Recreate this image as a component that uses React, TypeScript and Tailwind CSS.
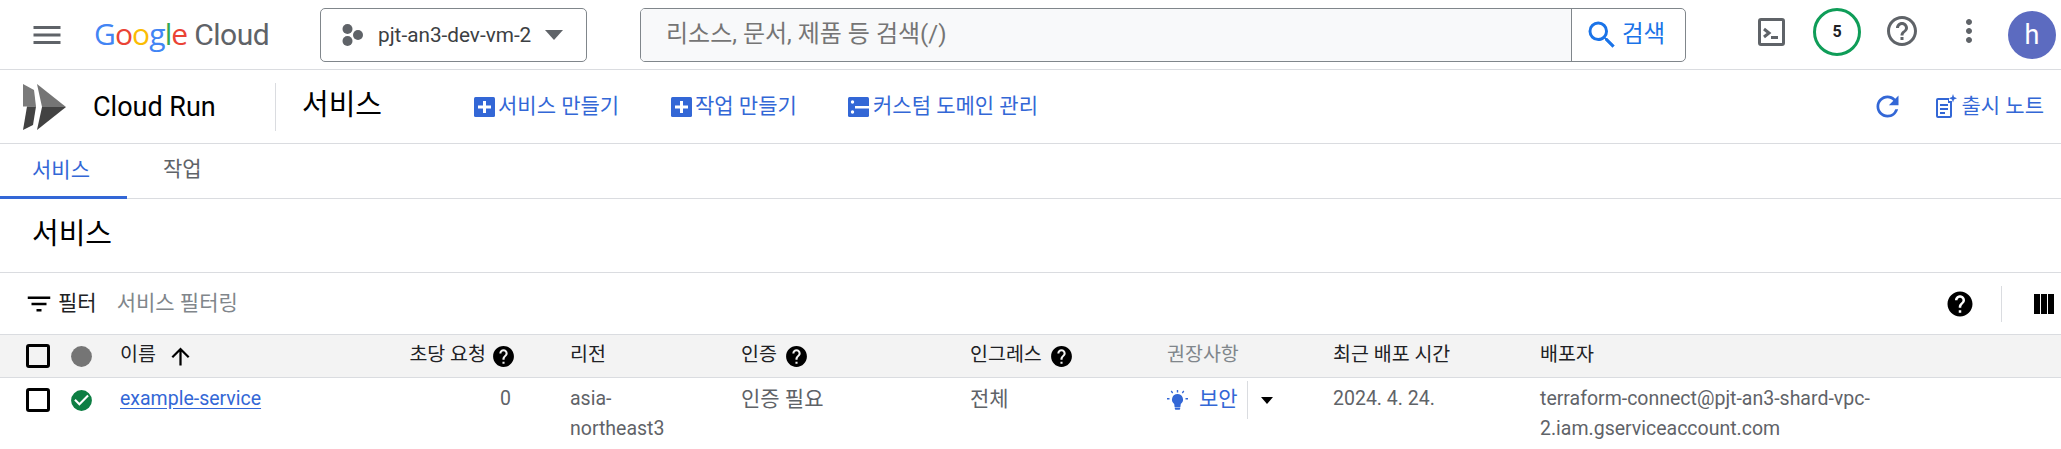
const font = "font-['Roboto','Noto_Sans_CJK_KR',sans-serif]";

function I({ d, size, className = "" }: { d: string; size: number; className?: string }) {
  return (
    <svg width={size} height={size} viewBox="0 0 24 24" fill="currentColor" className={`shrink-0 ${className}`}>
      <path d={d} />
    </svg>
  );
}

const P = {
  menu: "M3 18h18v-2H3v2zm0-5h18v-2H3v2zm0-7v2h18V6H3z",
  helpO: "M11 18h2v-2h-2v2zm1-16C6.48 2 2 6.48 2 12s4.48 10 10 10 10-4.48 10-10S17.52 2 12 2zm0 18c-4.41 0-8-3.59-8-8s3.59-8 8-8 8 3.59 8 8-3.59 8-8 8zm0-14c-2.21 0-4 1.79-4 4h2c0-1.1.9-2 2-2s2 .9 2 2c0 2-3 1.75-3 5h2c0-2.25 3-2.5 3-5 0-2.21-1.79-4-4-4z",
  help: "M12 2C6.48 2 2 6.48 2 12s4.48 10 10 10 10-4.48 10-10S17.52 2 12 2zm1 17h-2v-2h2v2zm2.07-7.75l-.9.92C13.45 12.9 13 13.5 13 15h-2v-.5c0-1.1.45-2.1 1.17-2.83l1.24-1.26c.37-.36.59-.86.59-1.41 0-1.1-.9-2-2-2s-2 .9-2 2H8c0-2.21 1.79-4 4-4s4 1.79 4 4c0 .88-.36 1.68-.93 2.25z",
  more: "M12 8c1.1 0 2-.9 2-2s-.9-2-2-2-2 .9-2 2 .9 2 2 2zm0 2c-1.1 0-2 .9-2 2s.9 2 2 2 2-.9 2-2-.9-2-2-2zm0 6c-1.1 0-2 .9-2 2s.9 2 2 2 2-.9 2-2-.9-2-2-2z",
  search: "M15.5 14h-.79l-.28-.27A6.471 6.471 0 0 0 16 9.5 6.5 6.5 0 1 0 9.5 16c1.61 0 3.09-.59 4.23-1.57l.27.28v.79l5 4.99L20.49 19l-4.99-5zm-6 0C7.01 14 5 11.99 5 9.5S7.01 5 9.5 5 14 7.01 14 9.5 11.99 14 9.5 14z",
  refresh: "M17.65 6.35A7.958 7.958 0 0 0 12 4c-4.42 0-7.99 3.58-7.99 8s3.57 8 7.99 8c3.73 0 6.84-2.55 7.73-6h-2.08A5.99 5.99 0 0 1 12 18c-3.31 0-6-2.69-6-6s2.69-6 6-6c1.66 0 3.14.69 4.22 1.78L13 11h7V4l-2.35 2.35z",
  filter: "M10 18h4v-2h-4v2zM3 6v2h18V6H3zm3 7h12v-2H6v2z",
  up: "M4 12l1.41 1.41L11 7.83V20h2V7.83l5.58 5.59L20 12l-8-8-8 8z",
  ok: "M12 2a10 10 0 1 0 0 20 10 10 0 0 0 0-20zm-2 15l-5-5 1.41-1.41L10 14.17l7.59-7.59L19 8l-9 9z",
};

function Check({ className = "" }: { className?: string }) {
  return (
    <svg width="30" height="30" viewBox="0 0 30 30" className={`shrink-0 ${className}`}>
      <rect x="5.500" y="4.500" width="21" height="21" rx="1.500" fill="none" stroke="#000" strokeWidth="3" />
    </svg>
  );
}

function PlusBox() {
  return (
    <svg width="21" height="20" viewBox="0 0 21 20" className="shrink-0">
      <rect width="21" height="20" rx="1.5" fill="#3367d6" />
      <path d="M9 4h3v4.500h5v3h-5V16H9v-4.500H4v-3h5z" fill="#fff" />
    </svg>
  );
}

function Dns() {
  return (
    <svg width="21" height="20" viewBox="0 0 21 20" className="shrink-0">
      <rect width="21" height="20" rx="1.5" fill="#3367d6" />
      <rect x="7" y="9" width="14" height="2.500" fill="#fff" />
      <circle cx="4.500" cy="5" r="1.700" fill="#fff" />
      <circle cx="4.500" cy="15" r="1.700" fill="#fff" />
    </svg>
  );
}

function Notes() {
  return (
    <svg width="21" height="25" viewBox="0 0 21 25" className="shrink-0" fill="#3367d6">
      <path fillRule="evenodd" d="M2 4h11v3h3v15a2 2 0 0 1-2 2H2a2 2 0 0 1-2-2V6a2 2 0 0 1 2-2zm0 2v16h12V9h-2V6z" />
      <path d="M4 10h8v2H4zM4 14h8v2H4zM4 18h5v2H4z" />
      <path d="M17 0l1 3 3 1.200-3 1.200-1 3-1-3-3-1.200 3-1.200z" />
    </svg>
  );
}

function Bulb() {
  return (
    <svg width="21" height="20" viewBox="0 0 21 20" className="shrink-0" fill="#3367d6">
      <path d="M10.500 4a5.500 5.500 0 0 0-3.300 9.900l.4 3h5.800l.4-3A5.500 5.500 0 0 0 10.500 4zM7.800 17.500h5.400v1.200a1 1 0 0 1-1 1H8.800a1 1 0 0 1-1-1z" />
      <path d="M9.800 0h1.400v2.500H9.800zM3.700 1.500l1-1 1.500 2.100-1 .8zM17.300 1.500l-1-1-1.500 2.100 1 .8zM0 8h2.500v1.400H0zM18.500 8H21v1.400h-2.500z" />
    </svg>
  );
}

const grid =
  "grid grid-cols-[43px_51px_180px_270px_171px_229px_197px_166px_207px_1fr] pl-[26px] leading-[30px]";

function HelpIcon() {
  return <I d={P.help} size={25} className="text-black" />;
}

export default function App() {
  return (
    <div className={`${font} h-[449px] w-[2061px] overflow-hidden bg-white text-[19.5px] leading-[30px] text-[#5f6368]`}>
      {/* top bar */}
      <header className="flex h-[70px] items-center border-b border-[#dadce0]">
        <I d={P.menu} size={36} className="ml-[29px] text-[#5f6368]" />
        <div className="ml-[29px] flex w-[226px] items-baseline text-[30px] leading-none">
          <span className="font-['Open_Sans',sans-serif] tracking-[-0.9px]">
            <span className="text-[#4285f4]">G</span>
            <span className="text-[#ea4335]">o</span>
            <span className="text-[#fbbc04]">o</span>
            <span className="text-[#4285f4]">g</span>
            <span className="text-[#34a853]">l</span>
            <span className="text-[#ea4335]">e</span>
          </span>
          <span className="ml-[7px] tracking-[-0.5px] text-[#5f6368]">Cloud</span>
        </div>
        <div className="flex h-[54px] w-[267px] items-center rounded-[5px] border border-[#80868b]">
          <svg width="22" height="22" viewBox="0 0 22 22" fill="#5f6368" className="ml-[21px] shrink-0">
            <circle cx="5.500" cy="5" r="5" />
            <circle cx="16" cy="11" r="5" />
            <circle cx="5.500" cy="17" r="5" />
          </svg>
          <span className="ml-[14px] text-[20.75px] text-[#3c4043]">pjt-an3-dev-vm-2</span>
          <svg width="18" height="10" viewBox="0 0 18 10" fill="#5f6368" className="ml-[14px] shrink-0">
            <path d="M0 0h18L9 10z" />
          </svg>
        </div>
        <div className="ml-[53px] flex h-[54px] w-[1046px] items-center overflow-hidden rounded-[5px] border border-[#80868b]">
          <div className="flex h-full flex-1 items-center bg-[#f8f9fa] pl-[25px] pb-[2px] text-[24px] text-[#757575]">
            리소스, 문서, 제품 등 검색(/)
          </div>
          <div className="flex h-full w-[114px] items-center border-l border-[#80868b] text-[#1a73e8]">
            <I d={P.search} size={36} className="ml-[12px]" />
            <span className="ml-[2px] pb-[2px] text-[23.5px]">검색</span>
          </div>
        </div>
        <svg width="27" height="28" viewBox="0 0 27 28" className="ml-[72px] shrink-0 -translate-y-[3px]">
          <rect x="1.500" y="1.500" width="24" height="25" rx="1.500" fill="none" stroke="#5f6368" strokeWidth="3" />
          <path d="M6 11l5 4-5 4" fill="none" stroke="#5f6368" strokeWidth="3" />
          <path d="M13 18h7v3h-7z" fill="#5f6368" />
        </svg>
        <div className="ml-[28px] flex h-[48px] w-[48px] -translate-y-[3px] items-center justify-center rounded-full border-[3px] border-[#0f9d58] text-[16px] font-bold text-[#202124]">
          5
        </div>
        <I d={P.helpO} size={36} className="ml-[23px] -translate-y-[4px] text-[#5f6368]" />
        <I d={P.more} size={36} className="ml-[31px] -translate-y-[4px] text-[#5f6368]" />
        <div className="ml-[21px] flex h-[48px] w-[48px] items-center justify-center rounded-full bg-[#5c6bc0] text-[27px] text-white">
          h
        </div>
      </header>

      {/* sub header */}
      <div className="flex h-[74px] items-center border-b border-[#dadce0]">
        <svg width="44" height="46" viewBox="0 0 44 46" className="ml-[23px] shrink-0">
          <path d="M0 0l11 6 2 16.500H0z" fill="#7a7a7a" />
          <path d="M13 22.500L10 41 0 46l4-23.500z" fill="#424242" />
          <path d="M14 0l29 23H19z" fill="#757575" />
          <path d="M19 23h24L14 46z" fill="#424242" />
        </svg>
        <span className="ml-[26px] w-[182px] text-[27px] text-black">Cloud Run</span>
        <div className="h-[48px] w-px bg-[#dadce0]" />
        <span className="ml-[26px] w-[172px] pb-[3px] text-[29px] text-black">서비스</span>
        <div className="flex items-center gap-[3px] text-[21px] text-[#3367d6]">
          <PlusBox />
          <span className="w-[173px] pb-[2px]">서비스 만들기</span>
        </div>
        <div className="flex items-center gap-[3px] text-[21px] text-[#3367d6]">
          <PlusBox />
          <span className="w-[153px] pb-[2px]">작업 만들기</span>
        </div>
        <div className="flex items-center gap-[4px] text-[21px] text-[#3367d6]">
          <Dns />
          <span className="pb-[2px]">커스텀 도메인 관리</span>
        </div>
        <div className="ml-auto flex items-center text-[21px] text-[#3367d6]">
          <I d={P.refresh} size={33} className="mr-[32px]" />
          <Notes />
          <span className="ml-[5px] mr-[17px] pb-[2px]">출시 노트</span>
        </div>
      </div>

      {/* tabs */}
      <div className="flex h-[55px] border-b border-[#dadce0] text-[21px]">
        <div className="flex h-[55px] w-[127px] items-center justify-center border-b-[3px] border-[#3367d6] pr-[5px] text-[#3367d6]">
          서비스
        </div>
        <div className="ml-[36px] flex items-center pb-[5px]">작업</div>
      </div>

      {/* title */}
      <div className="flex h-[74px] items-center border-b border-[#dadce0] pb-[3px] pl-[32px] text-[29px] text-black">
        서비스
      </div>

      {/* filter */}
      <div className="flex h-[61px] items-center text-[21px]">
        <I d={P.filter} size={30} className="ml-[24px] text-black" />
        <span className="ml-[4px] pb-[2px] text-[#202124]">필터</span>
        <span className="ml-[20px] pb-[2px] text-[#80868b]">서비스 필터링</span>
        <I d={P.help} size={30} className="ml-auto text-black" />
        <div className="ml-[26px] h-[36px] w-px bg-[#dadce0]" />
        <svg width="20" height="20" viewBox="0 0 20 20" fill="#000" className="ml-[32px] mr-[7px] shrink-0">
          <path d="M0 0h6v20H0zM7 0h6v20H7zM14 0h6v20h-6z" />
        </svg>
      </div>

      {/* table header */}
      <div className={`${grid} h-[44px] items-center border-y border-[#dadce0] bg-[#f3f3f3] text-[19.5px] text-[#202124]`}>
        <Check className="-ml-[4px]" />
        <div className="h-[25px] w-[25px]">
          <svg width="25" height="25" viewBox="0 0 24 24" fill="#757575">
            <circle cx="12" cy="12" r="10" />
          </svg>
        </div>
        <div className="flex items-center gap-[11px]">
          <span className="pb-[3px]">이름</span>
          <I d={P.up} size={27} className="text-black" />
        </div>
        <div className="flex items-center justify-end gap-[5px] pr-[54px]">
          <span className="pb-[3px]">초당 요청</span>
          <HelpIcon />
        </div>
        <div className="pb-[3px]">리전</div>
        <div className="flex items-center gap-[7px]">
          <span className="pb-[3px]">인증</span>
          <HelpIcon />
        </div>
        <div className="flex items-center gap-[7px]">
          <span className="pb-[3px]">인그레스</span>
          <HelpIcon />
        </div>
        <div className="pb-[3px] text-[#80868b]">권장사항</div>
        <div className="pb-[3px]">최근 배포 시간</div>
        <div className="pb-[3px]">배포자</div>
      </div>

      {/* row */}
      <div className={`${grid} items-start pt-[6px]`}>
        <Check className="-ml-[4px] mt-[1px]" />
        <I d={P.ok} size={25} className="mt-[4px] text-[#0d7e43]" />
        <a className="justify-self-start text-[#3367d6] underline decoration-[#3367d6] underline-offset-[3px]">example-service</a>
        <div className="pr-[59px] text-right">0</div>
        <div className="max-w-[120px] break-words">asia-northeast3</div>
        <div className="text-[21px]">인증 필요</div>
        <div className="text-[21px]">전체</div>
        <div className="-mt-[3px] flex items-center text-[21px] text-[#3367d6]">
          <div className="flex h-[38px] w-[81px] items-center border-r border-[#dadce0]">
            <Bulb />
            <span className="ml-[11px] pb-[2px]">보안</span>
          </div>
          <svg width="12" height="7" viewBox="0 0 12 7" className="ml-[13px] shrink-0">
            <path d="M0 0h12L6 7z" fill="#000" />
          </svg>
        </div>
        <div>2024. 4. 24.</div>
        <div className="w-[370px]">terraform-connect@pjt-an3-shard-vpc-2.iam.gserviceaccount.com</div>
      </div>
    </div>
  );
}
